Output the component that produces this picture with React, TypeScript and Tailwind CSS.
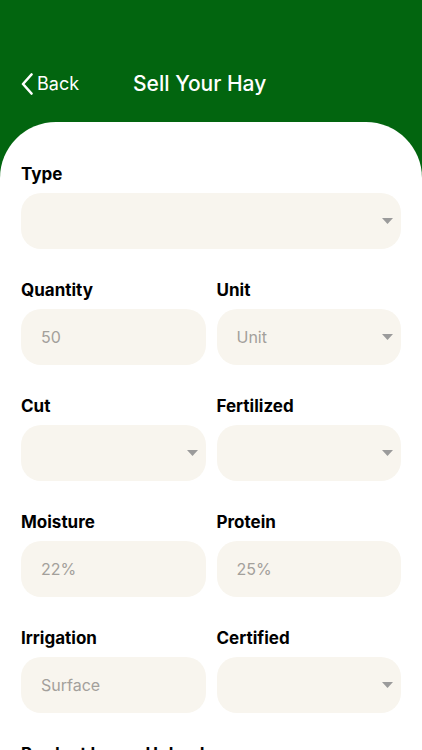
const font = { fontFamily: "Inter, 'Open Sans', sans-serif" };

function Caret() {
  return (
    <svg width="11" height="6" viewBox="0 0 11 6" className="absolute right-[8px] top-1/2 -translate-y-1/2">
      <path d="M0 0 L11 0 L5.5 6 Z" fill="#9b9b9b" />
    </svg>
  );
}

function Field({ label, value, select, grow }: { label: string; value?: string; select?: boolean; grow?: boolean }) {
  return (
    <div className={grow ? "flex min-w-0 flex-1 flex-col gap-[7px]" : "flex flex-col gap-[7px]"}>
      <div className="text-[17px] font-bold leading-[24px] text-black">{label}</div>
      <div className="relative flex h-[56px] items-center rounded-[20px] bg-[#f8f5ee] px-[20px]">
        <span className="text-[16px] text-[#a3a09b]">{value}</span>
        {select && <Caret />}
      </div>
    </div>
  );
}

export default function App() {
  return (
    <div className="h-[750px] w-[422px] overflow-hidden bg-[#02650f]" style={font}>
      <div className="flex h-[122px] items-start pt-[72px] pl-[21px]">
        <div className="flex items-center text-white">
          <svg width="12" height="22" viewBox="0 0 12 22" fill="none">
            <path d="M10.5 1.5 L2 11 L10.5 20.5" stroke="white" strokeWidth="2.6" strokeLinecap="round" strokeLinejoin="round" />
          </svg>
          <span className="ml-[4px] text-[18px] leading-[24px]">Back</span>
        </div>
        <div className="ml-[54px] text-[21px] font-medium leading-[24px] text-white">Sell Your Hay</div>
      </div>
      <div className="flex h-full flex-col gap-[29px] rounded-t-[56px] bg-white px-[21px] pt-[40px]">
        <Field label="Type" select />
        <div className="flex gap-[11px]">
          <Field grow label="Quantity" value="50" />
          <Field grow label="Unit" value="Unit" select />
        </div>
        <div className="flex gap-[11px]">
          <Field grow label="Cut" select />
          <Field grow label="Fertilized" select />
        </div>
        <div className="flex gap-[11px]">
          <Field grow label="Moisture" value="22%" />
          <Field grow label="Protein" value="25%" />
        </div>
        <div className="flex gap-[11px]">
          <Field grow label="Irrigation" value="Surface" />
          <Field grow label="Certified" select />
        </div>
        <div className="text-[17px] font-bold leading-[24px] text-black">Product Image Upload</div>
      </div>
    </div>
  );
}
